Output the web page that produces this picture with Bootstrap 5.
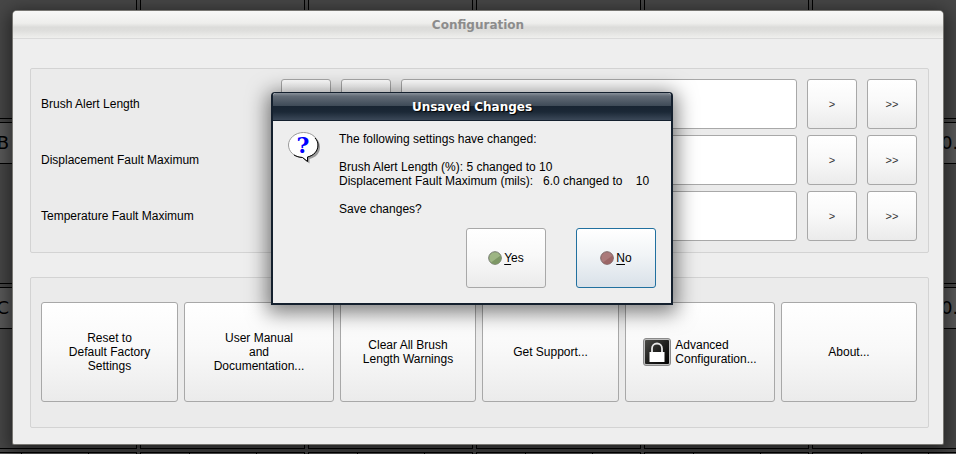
<!DOCTYPE html>
<html lang="en">
<head>
<meta charset="utf-8">
<meta name="viewport" content="width=device-width, initial-scale=1">
<title>Configuration</title>
<link href="https://cdn.jsdelivr.net/npm/bootstrap@5.3.0/dist/css/bootstrap.min.css" rel="stylesheet">
<style>
body{font-family:"Liberation Sans",Arial,sans-serif;font-size:12px;line-height:14px;color:#000;background:#464646}
.desk{min-height:100vh}
/* instrument tiles behind the windows */
.tiles{inset:0;display:grid;grid-template-columns:repeat(7,165px);grid-auto-rows:162px;gap:3px;margin:-43px 0 0 -28px}
.tile{border:1px solid #000;background:#474747}
.tile-head{height:41px;border-bottom:1px solid #000;background:#5a5a5a;display:grid;grid-template-columns:48px 1fr 48px;font:18px/40px "DejaVu Sans",sans-serif}
.tile-head.split span+span{border-left:1px solid #000}
.tile-head span{white-space:nowrap}
.tile-id{text-align:right;padding-right:12px}
.tile-value{padding-left:13px}
.win{margin:11px 13px 10px;background:#eee;border-radius:4px 4px 1px 1px;box-shadow:0 0 0 1px #777672,0 4px 18px 4px rgba(0,0,0,.5)}
.win-title{height:28px;font:bold 12px/28px "DejaVu Sans",sans-serif;color:#8c8c8c;border-bottom:1px solid #dadada;border-radius:4px 4px 0 0;background:linear-gradient(#f8f8f7,#eeeeec 45%,#dcdcda 60%,#dededc 72%,#efefed)}
.group{border:1px solid #d3d3d3;border-radius:2px;background:#ebebeb;margin:0 14px 0 17px}
.settings{margin-top:29px;padding:10px 11px 11px 10px;gap:6px}
.actions{margin-top:24px;margin-bottom:16px;padding:24px 11px 25px 10px}
.push{font-size:12px;line-height:14px;color:#000;border:1px solid #a8a8a8;border-radius:3px;padding:0;background:linear-gradient(#fff,#f9f9f9 45%,#ebebeb)}
.push:hover{border-color:#888}
.setting{gap:10px}
.step{width:50px;height:50px;font-size:11px;color:#333;flex:none}
.slot{height:50px;border:1px solid #a8a8a8;border-radius:3px;background:#fff;padding:0 8px;min-width:0}
.name{width:230px;flex:none}
.action-grid{display:grid;grid-template-columns:137fr 150fr 136fr 137fr 150fr 136fr;gap:6px}
.action-grid .push{height:100px}
.msg{left:271px;top:92px;width:402px;background:#eee;border:2px solid #14202e;border-top-width:1px;border-radius:4px 4px 0 0;box-shadow:0 4px 20px 4px rgba(0,0,0,.5)}
.msg-title{height:28px;font:bold 12px/28px "DejaVu Sans",sans-serif;color:#fff;text-shadow:1px 1px 1px #000;border-bottom:1px solid #14202e;border-radius:3px 3px 0 0;background:linear-gradient(#89919a,#626b76 12%,#3e4a57 48%,#182432 50%,#1b2836 70%,#3b4858)}
.msg-body{padding:11px 15px 15px}
.msg-text{white-space:pre;margin-left:18px}
.query{font:bold 22px "DejaVu Serif",serif;fill:#00f}
.answers{gap:30px;margin-top:12px}
.answer{width:80px;height:60px;gap:2px}
.answer.chosen{border-color:#21709f;background:linear-gradient(#fff,#f1f4f6 45%,#d9e1e9)}
.answer u{text-underline-offset:2px}
</style>
</head>
<body>
<div class="desk position-relative overflow-hidden">
  <div class="tiles position-absolute" aria-hidden="true">
    <div class="tile"></div><div class="tile"></div><div class="tile"></div><div class="tile"></div><div class="tile"></div><div class="tile"></div><div class="tile"></div>
    <div class="tile"><div class="tile-head"><span class="tile-id">B</span></div></div><div class="tile"></div><div class="tile"></div><div class="tile"></div><div class="tile"></div><div class="tile"><div class="tile-head"><span></span><span></span><span class="tile-value">0.0</span></div></div><div class="tile"></div>
    <div class="tile"><div class="tile-head"><span class="tile-id">C</span></div></div><div class="tile"></div><div class="tile"></div><div class="tile"></div><div class="tile"></div><div class="tile"><div class="tile-head"><span></span><span></span><span class="tile-value">0.0</span></div></div><div class="tile"></div>
    <div class="tile"><div class="tile-head split"><span></span><span></span><span></span></div></div><div class="tile"><div class="tile-head split"><span></span><span></span><span></span></div></div><div class="tile"><div class="tile-head split"><span></span><span></span><span></span></div></div><div class="tile"><div class="tile-head split"><span></span><span></span><span></span></div></div><div class="tile"><div class="tile-head split"><span></span><span></span><span></span></div></div><div class="tile"><div class="tile-head split"><span></span><span></span><span></span></div></div><div class="tile"></div>
  </div>

  <main class="d-flex flex-column position-relative">
    <section class="win">
      <h1 class="win-title text-center m-0">Configuration</h1>
      <div class="group settings d-flex flex-column">
        <div class="setting d-flex align-items-center">
          <label class="name" for="brush">Brush Alert Length</label>
          <button type="button" class="push step" aria-label="Much lower"></button><button type="button" class="push step" aria-label="Lower"></button>
          <input class="slot flex-fill" id="brush" type="text">
          <button type="button" class="push step">&gt;</button><button type="button" class="push step">&gt;&gt;</button>
        </div>
        <div class="setting d-flex align-items-center">
          <label class="name" for="displacement">Displacement Fault Maximum</label>
          <button type="button" class="push step" aria-label="Much lower"></button><button type="button" class="push step" aria-label="Lower"></button>
          <input class="slot flex-fill" id="displacement" type="text">
          <button type="button" class="push step">&gt;</button><button type="button" class="push step">&gt;&gt;</button>
        </div>
        <div class="setting d-flex align-items-center">
          <label class="name" for="temperature">Temperature Fault Maximum</label>
          <button type="button" class="push step" aria-label="Much lower"></button><button type="button" class="push step" aria-label="Lower"></button>
          <input class="slot flex-fill" id="temperature" type="text">
          <button type="button" class="push step">&gt;</button><button type="button" class="push step">&gt;&gt;</button>
        </div>
      </div>
      <div class="group actions">
        <div class="action-grid">
          <button type="button" class="push">Reset to<br>Default Factory<br>Settings</button>
          <button type="button" class="push">User Manual<br>and<br>Documentation...</button>
          <button type="button" class="push">Clear All Brush<br>Length Warnings</button>
          <button type="button" class="push">Get Support...</button>
          <button type="button" class="push d-flex align-items-center justify-content-center gap-1">
            <svg width="28" height="28" viewBox="0 0 28 28" aria-hidden="true">
              <defs><linearGradient id="plate" x1="0" y1="0" x2="1" y2="1"><stop offset="0" stop-color="#4a4a46"/><stop offset=".5" stop-color="#20201e"/><stop offset="1" stop-color="#000"/></linearGradient></defs>
              <rect x=".5" y=".5" width="27" height="27" rx="2.5" fill="#bdbdbd" stroke="#8a8a8a"/>
              <rect x="2" y="2" width="24" height="24" rx="1" fill="url(#plate)"/>
              <path d="M9 15v-4.500a5 5 0 0 1 10 0V15" fill="none" stroke="#e6e6e6" stroke-width="1.800"/>
              <rect x="6.500" y="14" width="15" height="10" fill="#fff"/>
            </svg>
            <span class="text-start">Advanced<br>Configuration...</span>
          </button>
          <button type="button" class="push">About...</button>
        </div>
      </div>
    </section>
  </main>

  <section class="msg position-absolute" role="dialog" aria-labelledby="msg-heading">
    <h2 class="msg-title text-center m-0" id="msg-heading">Unsaved Changes</h2>
    <div class="msg-body">
      <div class="d-flex">
        <svg class="flex-shrink-0" width="33" height="32" viewBox="0 0 33 32" aria-hidden="true">
          <path d="M17.500 2.500C26 2.500 32 8 32 15c0 6-4 10.500-10.500 12v4.500L16 27.500z" fill="#999"/>
          <path d="M15.500.5C24 .5 30 6 30 13c0 6-4 10.500-10.500 12v4.500L14.500 25.500C6 25 .5 19.500.5 13S7 .5 15.500.5z" fill="#fff" stroke="#999"/>
          <path d="M27 6c2 2 3 4.500 3 7 0 6-4 10.500-10.500 12v4.500L14.500 25.500c-3.500-.2-6-1-8.500-2.500" fill="none" stroke="#000"/>
          <text class="query" x="15" y="21" text-anchor="middle">?</text>
        </svg>
        <p class="msg-text mb-0">The following settings have changed:

Brush Alert Length (%): 5 changed to 10
Displacement Fault Maximum (mils):   6.0 changed to    10

Save changes?</p>
      </div>
      <div class="answers d-flex justify-content-end">
        <button type="button" class="push answer d-flex align-items-center justify-content-center">
          <svg width="14" height="14" viewBox="0 0 14 14" aria-hidden="true"><circle cx="7" cy="7" r="6.300" fill="#9db583" stroke="#71786b"/><path d="M12.500 4.500A6 6 0 0 1 3 11.500z" fill="#7d9765"/></svg>
          <span><u>Y</u>es</span>
        </button>
        <button type="button" class="push answer chosen d-flex align-items-center justify-content-center">
          <svg width="14" height="14" viewBox="0 0 14 14" aria-hidden="true"><circle cx="7" cy="7" r="6.300" fill="#ab7a7a" stroke="#7b6666"/><path d="M12.500 4.500A6 6 0 0 1 3 11.500z" fill="#9b6666"/></svg>
          <span><u>N</u>o</span>
        </button>
      </div>
    </div>
  </section>
</div>
<script src="https://cdn.jsdelivr.net/npm/bootstrap@5.3.0/dist/js/bootstrap.bundle.min.js"></script>
</body>
</html>
